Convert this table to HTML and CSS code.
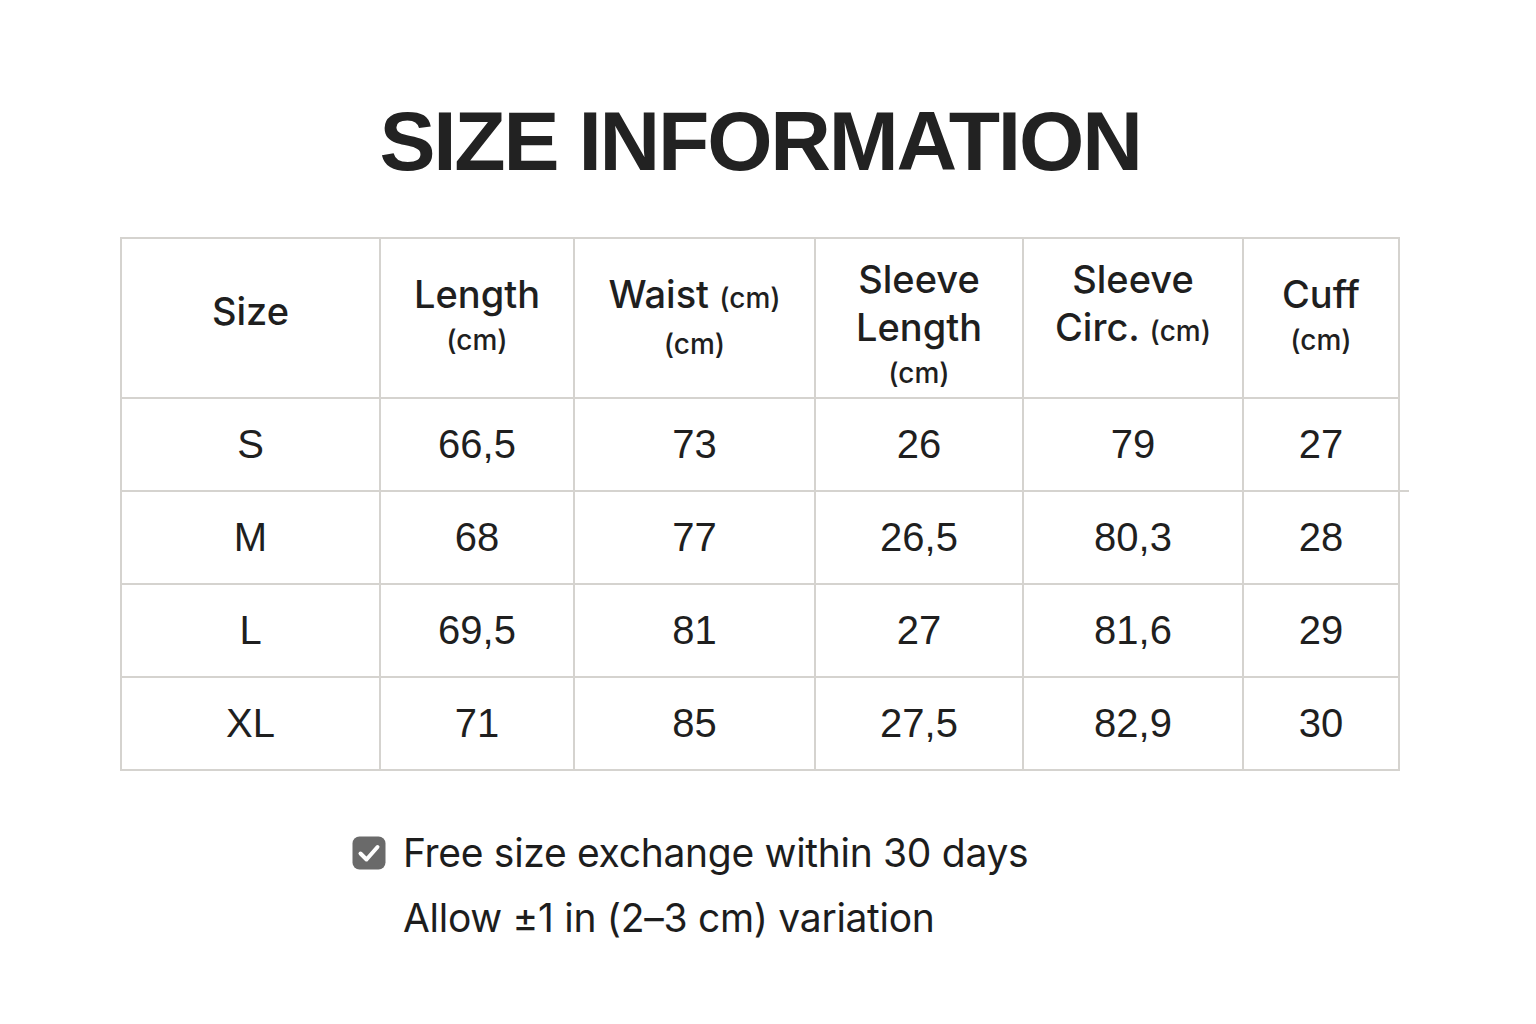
FILE: index.html
```html
<!DOCTYPE html>
<html lang="en">
<head>
<meta charset="utf-8">
<title>Size Information</title>
<link rel="stylesheet" href="styles.css">
</head>
<body>
<main class="page">
  <h1 class="title">SIZE INFORMATION</h1>
  <table class="sizes">
    <colgroup>
      <col class="c1"><col class="c2"><col class="c3"><col class="c4"><col class="c5"><col class="c6">
    </colgroup>
    <thead>
      <tr>
        <th><div class="hc one"><div class="hm">Size</div></div></th>
        <th><div class="hc"><div class="hm">Length</div><div class="hu">(cm)</div></div></th>
        <th><div class="hc"><div class="hm">Waist <span class="hu-in">(cm)</span></div><div class="hu">(cm)</div></div></th>
        <th><div class="hc high"><div class="hm">Sleeve</div><div class="hm">Length</div><div class="hu">(cm)</div></div></th>
        <th><div class="hc high"><div class="hm">Sleeve</div><div class="hm">Circ. <span class="hu-in">(cm)</span></div></div></th>
        <th><div class="hc"><div class="hm">Cuff</div><div class="hu">(cm)</div></div></th>
      </tr>
    </thead>
    <tbody>
      <tr><td>S</td><td>66,5</td><td>73</td><td>26</td><td>79</td><td>27</td></tr>
      <tr class="spill"><td>M</td><td>68</td><td>77</td><td>26,5</td><td>80,3</td><td>28</td></tr>
      <tr><td>L</td><td>69,5</td><td>81</td><td>27</td><td>81,6</td><td>29</td></tr>
      <tr><td>XL</td><td>71</td><td>85</td><td>27,5</td><td>82,9</td><td>30</td></tr>
    </tbody>
  </table>
  <div class="notes">
    <div class="note">
      <span class="check">
        <svg viewBox="0 0 34 34" width="34" height="34" aria-hidden="true">
          <rect x="0.5" y="0.5" width="33" height="33" rx="7" fill="#6a6a6a"/>
          <path d="M8.5 17.5 L14.5 23.5 L25.5 11" fill="none" stroke="#ffffff" stroke-width="4" stroke-linecap="round" stroke-linejoin="round"/>
        </svg>
      </span>
      <span class="note-text">Free size exchange within 30 days</span>
    </div>
    <div class="note">
      <span class="check-space"></span>
      <span class="note-text">Allow ±1 in (2–3 cm) variation</span>
    </div>
  </div>
</main>
</body>
</html>
```

FILE: styles.css
```css
html, body {
  margin: 0;
  padding: 0;
  background: #ffffff;
}

.page {
  width: 1536px;
  height: 1024px;
  overflow: hidden;
  padding-top: 99px;
  box-sizing: border-box;
  color: #1e1e1e;
}

.title {
  margin: 0 16px 0 0;
  text-align: center;
  font-family: "Liberation Sans", Arial, sans-serif;
  font-weight: 700;
  font-size: 84px;
  line-height: 84px;
  letter-spacing: -2.2px;
  color: #222222;
}

.sizes {
  margin: 54px 0 0 120px;
  border-collapse: collapse;
  table-layout: fixed;
  width: 1278px;
}

.c1 { width: 259px; }
.c2 { width: 194px; }
.c3 { width: 241px; }
.c4 { width: 208px; }
.c5 { width: 220px; }
.c6 { width: 156px; }

.sizes th,
.sizes td {
  border: 2px solid #d5d3cf;
  text-align: center;
  padding: 0;
}

.sizes th {
  height: 158px;
  vertical-align: top;
  font-family: Inter, "Liberation Sans", sans-serif;
  font-weight: 500;
  color: #1f1f1f;
}

.hc { margin-top: 31px; }
.hc.one { margin-top: 48px; }
.hc.high { margin-top: 16px; }

.hm {
  font-size: 38px;
  line-height: 48px;
}

.hu {
  font-size: 28px;
  line-height: 44px;
}

.hu-in {
  font-size: 28px;
}

.sizes td {
  height: 91px;
  vertical-align: middle;
  font-family: "Liberation Sans", Arial, sans-serif;
  font-size: 40px;
  color: #1f1f1f;
}

.sizes tr.spill td:last-child {
  position: relative;
}

.sizes tr.spill td:last-child::before {
  content: "";
  position: absolute;
  top: -2px;
  right: -11px;
  width: 10px;
  height: 2px;
  background: #d5d3cf;
}

.notes {
  margin: 49px 0 0 352px;
  font-family: Inter, "Liberation Sans", sans-serif;
  font-size: 39px;
  letter-spacing: -0.3px;
  color: #1d1d1d;
}

.note {
  display: flex;
  align-items: center;
  gap: 17px;
  height: 65px;
}

.check {
  width: 34px;
  height: 34px;
  display: flex;
}

.check-space {
  width: 34px;
}
```
